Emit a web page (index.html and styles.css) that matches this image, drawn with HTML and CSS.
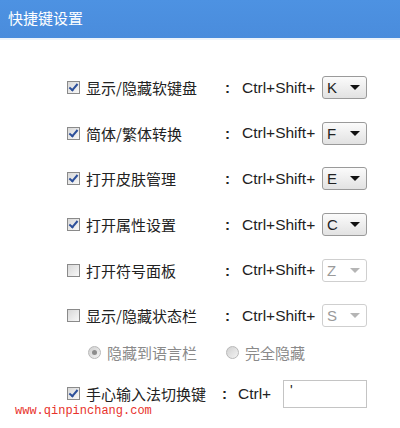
FILE: index.html
```html
<!DOCTYPE html>
<html lang="zh-CN">
<head>
    <meta charset="UTF-8">
    <title>快捷键设置</title>
    <link rel="stylesheet" href="styles.css">
</head>
<body>
    <div class="titulo">快捷键设置</div>
    <div class="painel">
        <div class="linha">
            <label class="opcao"><span class="caixa marcada"></span>显示/隐藏软键盘</label>
            <span class="dois-pontos">:</span>
            <span class="teclas">Ctrl+Shift+</span>
            <span class="seletor">K<i class="seta"></i></span>
        </div>
        <div class="linha">
            <label class="opcao"><span class="caixa marcada"></span>简体/繁体转换</label>
            <span class="dois-pontos">:</span>
            <span class="teclas">Ctrl+Shift+</span>
            <span class="seletor">F<i class="seta"></i></span>
        </div>
        <div class="linha">
            <label class="opcao"><span class="caixa marcada"></span>打开皮肤管理</label>
            <span class="dois-pontos">:</span>
            <span class="teclas">Ctrl+Shift+</span>
            <span class="seletor">E<i class="seta"></i></span>
        </div>
        <div class="linha">
            <label class="opcao"><span class="caixa marcada"></span>打开属性设置</label>
            <span class="dois-pontos">:</span>
            <span class="teclas">Ctrl+Shift+</span>
            <span class="seletor">C<i class="seta"></i></span>
        </div>
        <div class="linha">
            <label class="opcao"><span class="caixa"></span>打开符号面板</label>
            <span class="dois-pontos">:</span>
            <span class="teclas">Ctrl+Shift+</span>
            <span class="seletor desativado">Z<i class="seta"></i></span>
        </div>
        <div class="linha">
            <label class="opcao"><span class="caixa"></span>显示/隐藏状态栏</label>
            <span class="dois-pontos">:</span>
            <span class="teclas">Ctrl+Shift+</span>
            <span class="seletor desativado">S<i class="seta"></i></span>
        </div>
        <div class="linha-radio">
            <label class="radio-opcao"><span class="radio marcado"></span>隐藏到语言栏</label>
            <label class="radio-opcao"><span class="radio"></span>完全隐藏</label>
        </div>
        <div class="linha ultima">
            <label class="opcao"><span class="caixa marcada"></span>手心输入法切换键</label>
            <span class="dois-pontos">:</span>
            <span class="teclas curto">Ctrl+</span>
            <span class="campo">'</span>
        </div>
    </div>
    <div class="marca">www.qinpinchang.com</div>
</body>
</html>
```

FILE: styles.css
```css
body {
    margin: 0;
    width: 400px;
    height: 428px;
    overflow: hidden;
    background: #fff;
    font-family: "Noto Sans CJK SC", "Liberation Sans", sans-serif;
    color: #222;
    position: relative;
}
.titulo {
    height: 38px;
    line-height: 36px;
    padding-left: 8px;
    background: linear-gradient(#4d92e2, #4a8cdc);
    border-bottom: 2px solid #eef4fb;
    color: #fff;
    font-size: 15px;
}
.painel {
    padding: 25px 0 0 67px;
}
.linha {
    display: flex;
    align-items: center;
    height: 45.6px;
}
.opcao {
    display: flex;
    align-items: center;
    width: 158px;
    font-size: 15px;
    white-space: nowrap;
}
.caixa {
    width: 11px;
    height: 11px;
    border: 1px solid #8a8a8a;
    background: linear-gradient(135deg, #d8d8d8, #f8f8f8);
    margin-right: 6px;
    position: relative;
    flex: none;
}
.caixa.marcada::after {
    content: "";
    position: absolute;
    left: 3px;
    top: 0px;
    width: 3px;
    height: 7px;
    border: solid #2c4f9a;
    border-width: 0 2px 2px 0;
    transform: rotate(40deg);
}
.dois-pontos {
    width: 17px;
    font-family: "Liberation Sans", sans-serif;
    font-size: 15px;
    font-weight: bold;
}
.teclas {
    width: 80px;
    font-family: "Liberation Sans", sans-serif;
    font-size: 15.5px;
}
.seletor {
    display: flex;
    align-items: center;
    box-sizing: border-box;
    width: 45px;
    height: 23px;
    padding-left: 4px;
    border: 1px solid #9a9a9a;
    border-radius: 3px;
    background: linear-gradient(#fbfbfb, #e2e2e2);
    font-family: "Liberation Sans", sans-serif;
    font-size: 15px;
    color: #222;
}
.seta {
    margin-left: auto;
    margin-right: 6px;
    width: 0;
    height: 0;
    border-left: 5px solid transparent;
    border-right: 5px solid transparent;
    border-top: 5px solid #111;
}
.seletor.desativado {
    border-color: #cfcfcf;
    background: #fff;
    color: #9a9a9a;
}
.seletor.desativado .seta {
    border-top-color: #b5b5b5;
}
.linha-radio {
    display: flex;
    align-items: center;
    height: 28px;
    padding-left: 21px;
    color: #8a8a8a;
    font-size: 15px;
}
.radio-opcao {
    display: flex;
    align-items: center;
    width: 138px;
}
.radio {
    width: 11px;
    height: 11px;
    border: 1px solid #b8b8b8;
    border-radius: 50%;
    background: linear-gradient(135deg, #d0d0d0, #f4f4f4);
    margin-right: 6px;
    position: relative;
}
.radio.marcado::after {
    content: "";
    position: absolute;
    left: 3px;
    top: 3px;
    width: 5px;
    height: 5px;
    border-radius: 50%;
    background: #8c8c8c;
}
.linha.ultima {
    height: 54px;
}
.ultima .opcao {
    width: 155px;
}
.ultima .dois-pontos {
    width: 16px;
}
.teclas.curto {
    width: 45px;
}
.campo {
    box-sizing: border-box;
    width: 84px;
    height: 28px;
    border: 1px solid #c4c4c4;
    padding: 1px 0 0 6px;
    font-family: "Liberation Sans", sans-serif;
    font-size: 14px;
    line-height: 16px;
}
.marca {
    position: absolute;
    left: 15px;
    top: 404px;
    font-family: "Liberation Mono", monospace;
    font-size: 12px;
    line-height: 14px;
    color: #e8322c;
}
```
